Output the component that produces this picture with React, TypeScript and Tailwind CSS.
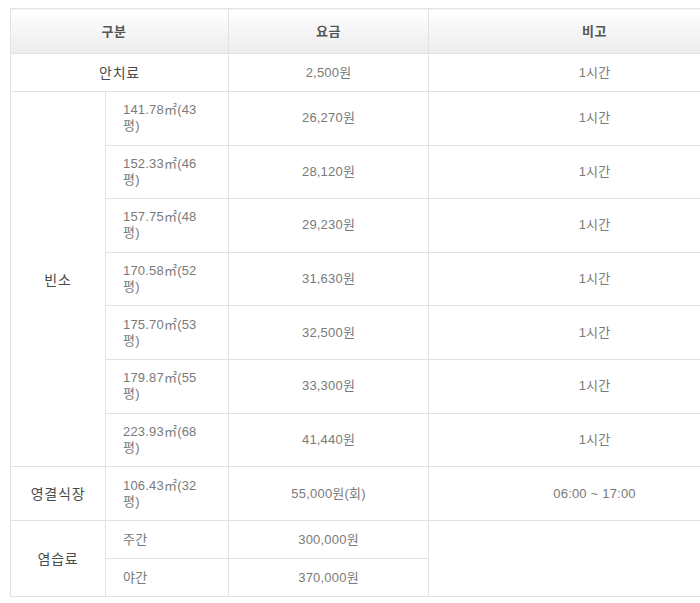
import React from "react";

const rooms = [
  ["141.78㎡(43", "26,270원"],
  ["152.33㎡(46", "28,120원"],
  ["157.75㎡(48", "29,230원"],
  ["170.58㎡(52", "31,630원"],
  ["175.70㎡(53", "32,500원"],
  ["179.87㎡(55", "33,300원"],
  ["223.93㎡(68", "41,440원"],
];

const td = "border border-[#e2e2e2] text-[13px] tracking-[0.2px] text-[#7a7a7a] leading-[16px] font-['Liberation_Sans','Noto_Sans_CJK_KR',sans-serif]";
const lab = "border border-[#e2e2e2] text-[14px] tracking-[0.8px] text-[#4a4a4a] text-center";
const th = "border border-[#e2e2e2] text-[13px] font-bold tracking-[0.5px] text-[#555] bg-gradient-to-b from-white to-[#ececec]";

function Size({ s }: { s: string }) {
  return (
    <div className="flex flex-col">
      <span className="block leading-[16px]">{s}</span>
      <span className="block leading-[16px]">평)</span>
    </div>
  );
}

export default function App() {
  return (
    <div className="w-[700px] h-[603px] overflow-hidden bg-white pt-[8px] pl-[10px]" style={{ fontFamily: '"Noto Sans CJK KR", "Noto Sans", sans-serif' }}>
      <table className="w-[750px] border-collapse table-fixed">
        <colgroup>
          <col className="w-[95px]" />
          <col className="w-[123px]" />
          <col className="w-[200px]" />
          <col className="w-[332px]" />
        </colgroup>
        <thead>
          <tr className="h-[45px]">
            <th colSpan={2} className={`${th} pr-[11px]`}>구분</th>
            <th className={th}>요금</th>
            <th className={th}>비고</th>
          </tr>
        </thead>
        <tbody>
          <tr className="h-[38px]">
            <td colSpan={2} className={lab}>안치료</td>
            <td className={`${td} text-center`}>2,500원</td>
            <td className={`${td} text-center`}>1시간</td>
          </tr>
          {rooms.map(([size, price], i) => (
            <tr key={size} className="h-[53.6px]">
              {i === 0 && (
                <td rowSpan={7} className={lab}>빈소</td>
              )}
              <td className={`${td} pl-[17px] text-left`}>
                <Size s={size} />
              </td>
              <td className={`${td} text-center`}>{price}</td>
              <td className={`${td} text-center`}>1시간</td>
            </tr>
          ))}
          <tr className="h-[54px]">
            <td className={lab}>영결식장</td>
            <td className={`${td} pl-[17px] text-left`}>
              <Size s="106.43㎡(32" />
            </td>
            <td className={`${td} text-center`}>55,000원(회)</td>
            <td className={`${td} text-center`}>06:00 ~ 17:00</td>
          </tr>
          <tr className="h-[38px]">
            <td rowSpan={2} className={lab}>염습료</td>
            <td className={`${td} pl-[17px] text-left`}>주간</td>
            <td className={`${td} text-center`}>300,000원</td>
            <td rowSpan={2} className="border border-[#e2e2e2]"></td>
          </tr>
          <tr className="h-[38px]">
            <td className={`${td} pl-[17px] text-left`}>야간</td>
            <td className={`${td} text-center`}>370,000원</td>
          </tr>
        </tbody>
      </table>
    </div>
  );
}
